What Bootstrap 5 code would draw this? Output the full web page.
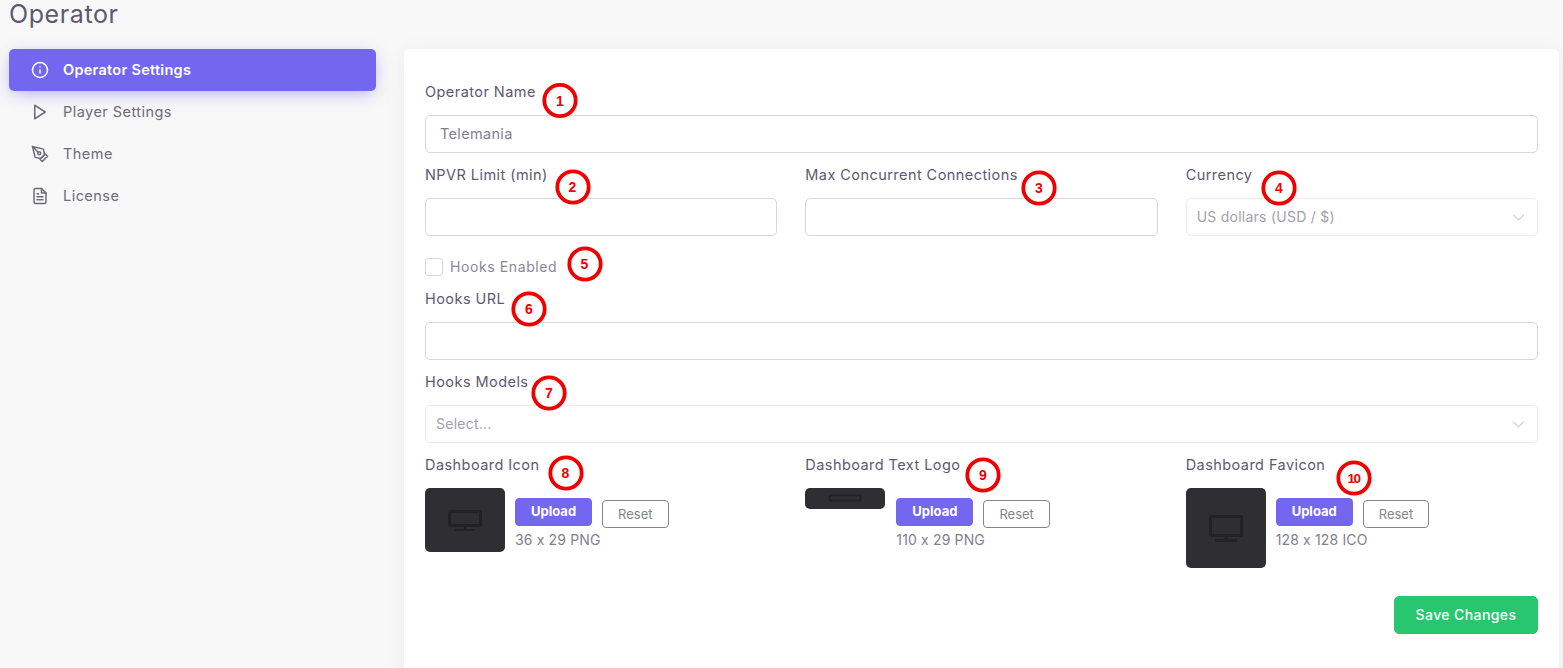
<!DOCTYPE html>
<html lang="en"><head><meta charset="utf-8"><title>Operator</title>
<link href="https://cdn.jsdelivr.net/npm/bootstrap@5.3.0/dist/css/bootstrap.min.css" rel="stylesheet">
<style>
html,body{height:668px;overflow:hidden}
body{background:#f8f8f8;font-family:Inter,"Liberation Sans",sans-serif;font-size:14px;line-height:21px;color:#6e6b7b;position:relative;letter-spacing:.15px}
.page-title{font-size:25px;line-height:26px;font-weight:400;color:#5e5873;margin:0 0 22px 9px;padding-top:1px;letter-spacing:.6px}
.page-wrap{display:flex;padding-left:9px}
.side-col{width:367px;flex:none}
.side-col .nav-link{height:42px;display:flex;align-items:center;gap:14px;padding:0 22px 2px;color:#6e6b7b;border-radius:5px;font-size:14.5px;letter-spacing:.46px}
.side-col .nav-link svg{width:18px;height:18px;flex:none;fill:none;stroke:currentColor;stroke-width:2;stroke-linecap:round;stroke-linejoin:round;position:relative;top:1px}
.side-col .nav-link.active{background:#7367f0;color:#fff;font-weight:600;letter-spacing:.28px;box-shadow:0 4px 18px -4px rgba(115,103,240,.65)}
.main-card{flex:1;margin:0 4px 0 28px;border:0;border-radius:6px;box-shadow:0 4px 24px rgba(34,41,47,.05);height:640px}
.main-card .card-body{padding:32px 21px}
.row-fields{--bs-gutter-x:28px}
.field-gap{margin-bottom:11px}
.field-label{display:block;color:#5e5873;margin-bottom:13px;line-height:21px;font-size:14.5px;letter-spacing:.44px}
.field-input{height:38px;border:1px solid #d8d6de;border-radius:5px;padding:0 14px 2px;color:#82808f;font-size:14.5px;letter-spacing:.33px}
.field-select{height:38px;border:1px solid #ececf0;border-radius:5px;padding:0 10px 2px;color:#a3a1ac;font-size:14px;letter-spacing:.25px;background-image:url("data:image/svg+xml,%3csvg xmlns='http://www.w3.org/2000/svg' viewBox='0 0 16 16'%3e%3cpath fill='none' stroke='%23dcdce2' stroke-width='2' stroke-linecap='round' stroke-linejoin='round' d='M2 5l6 6 6-6'/%3e%3c/svg%3e");background-position:right 12px center;background-size:13px}
.check-line{display:flex;align-items:center;gap:7px;height:21px;margin:20px 0 11px;color:#8a8896;letter-spacing:.6px}
.check-line .form-check-input{width:18px;height:18px;margin:0;border:1px solid #d8d6de;border-radius:3px;flex:none}
.thumb{background:#2e2e33;border-radius:5px;width:80px;flex:none;display:flex;align-items:center;justify-content:center}
.thumb svg{fill:none;stroke:#222226}
.thumb-a{height:64px}.thumb-a svg{width:34px;height:21px}
.thumb-b{height:21px}.thumb-b svg{width:34px;height:9px}
.thumb-c{height:80px}.thumb-c svg{width:34px;height:27px}
.up-side{margin:10px 0 0 10px}
.thumb-b + .up-side{margin-left:11px}
.btn-up{height:28px;padding:0 15px 2px;font-size:13px;font-weight:700;line-height:24px;background:#7367f0;border-color:#7367f0;border-radius:4px;color:#fff;letter-spacing:0}
.btn-reset{height:28px;padding:0 15px;font-size:13px;line-height:26px;margin:2px 0 0 10px;border:1px solid #82868b;color:#82868b;border-radius:4px;background:#fff;letter-spacing:0}
.hint{margin-top:1px;font-size:14px;color:#82808f}
.btn-save{width:144px;height:38px;padding:0 0 2px;background:#28c76f;border-color:#28c76f;color:#fff;font-size:14px;font-weight:500;border-radius:5px;letter-spacing:.4px}
.save-line{margin-top:28px}
.marks{position:absolute;left:0;top:0;width:1563px;height:668px;pointer-events:none}
.marks circle{fill:#fff;stroke:#f00000;stroke-width:3.8}
.marks text{fill:#f00000;font:700 14px "Liberation Sans",sans-serif;text-anchor:middle;letter-spacing:0}
.marks .two-digit{letter-spacing:-1.4px;font-size:13.500px}
</style></head>
<body>
<h1 class="page-title">Operator</h1>
<div class="page-wrap">
  <div class="side-col">
    <ul class="nav nav-pills flex-column">
      <li class="nav-item"><a class="nav-link active" href="#"><svg viewBox="0 0 24 24"><circle cx="12" cy="12" r="10"/><line x1="12" y1="16" x2="12" y2="12"/><line x1="12" y1="8" x2="12.01" y2="8"/></svg>Operator Settings</a></li>
      <li class="nav-item"><a class="nav-link" href="#"><svg viewBox="0 0 24 24"><polygon points="5 3 19 12 5 21 5 3"/></svg>Player Settings</a></li>
      <li class="nav-item"><a class="nav-link" href="#"><svg viewBox="0 0 24 24"><path d="M12 19l7-7 3 3-7 7-3-3z"/><path d="M18 13l-1.5-7.5L2 2l3.5 14.5L13 18l5-5z"/><path d="M2 2l7.586 7.586"/><circle cx="11" cy="11" r="2"/></svg>Theme</a></li>
      <li class="nav-item"><a class="nav-link" href="#"><svg viewBox="0 0 24 24"><path d="M14 2H6a2 2 0 0 0-2 2v16a2 2 0 0 0 2 2h12a2 2 0 0 0 2-2V8z"/><polyline points="14 2 14 8 20 8"/><line x1="16" y1="13" x2="8" y2="13"/><line x1="16" y1="17" x2="8" y2="17"/><polyline points="10 9 9 9 8 9"/></svg>License</a></li>
    </ul>
  </div>
  <div class="card main-card">
    <div class="card-body">
      <div class="field-gap">
        <label class="field-label">Operator Name</label>
        <input class="form-control field-input" value="Telemania">
      </div>
      <div class="row row-fields field-gap">
        <div class="col-4"><label class="field-label">NPVR Limit (min)</label><input class="form-control field-input"></div>
        <div class="col-4"><label class="field-label">Max Concurrent Connections</label><input class="form-control field-input"></div>
        <div class="col-4"><label class="field-label">Currency</label><select class="form-select field-select"><option>US dollars (USD / $)</option></select></div>
      </div>
      <div class="check-line"><input class="form-check-input" type="checkbox"><span>Hooks Enabled</span></div>
      <div class="field-gap">
        <label class="field-label">Hooks URL</label>
        <input class="form-control field-input">
      </div>
      <div class="field-gap">
        <label class="field-label">Hooks Models</label>
        <select class="form-select field-select"><option>Select...</option></select>
      </div>
      <div class="row row-fields">
        <div class="col-4">
          <label class="field-label">Dashboard Icon</label>
          <div class="d-flex align-items-start">
            <div class="thumb thumb-a"><svg viewBox="0 0 34 21" preserveAspectRatio="none"><rect x="1.5" y="1.5" width="31" height="14" rx="1" stroke-width="3"/><path d="M17 16v3M7 20h20" stroke-width="2"/></svg></div>
            <div class="up-side">
              <div class="d-flex align-items-start"><button class="btn btn-up">Upload</button><button class="btn btn-reset">Reset</button></div>
              <div class="hint">36 x 29 PNG</div>
            </div>
          </div>
        </div>
        <div class="col-4">
          <label class="field-label">Dashboard Text Logo</label>
          <div class="d-flex align-items-start">
            <div class="thumb thumb-b"><svg viewBox="0 0 34 9" preserveAspectRatio="none"><rect x="1.5" y="1.5" width="31" height="5" rx="1" stroke-width="2"/></svg></div>
            <div class="up-side">
              <div class="d-flex align-items-start"><button class="btn btn-up">Upload</button><button class="btn btn-reset">Reset</button></div>
              <div class="hint">110 x 29 PNG</div>
            </div>
          </div>
        </div>
        <div class="col-4">
          <label class="field-label">Dashboard Favicon</label>
          <div class="d-flex align-items-start">
            <div class="thumb thumb-c"><svg viewBox="0 0 34 27"><rect x="1.5" y="1.5" width="31" height="19" rx="1" stroke-width="3"/><path d="M17 21v3M6 25.5h22" stroke-width="3"/></svg></div>
            <div class="up-side">
              <div class="d-flex align-items-start"><button class="btn btn-up">Upload</button><button class="btn btn-reset">Reset</button></div>
              <div class="hint">128 x 128 ICO</div>
            </div>
          </div>
        </div>
      </div>
      <div class="d-flex justify-content-end save-line"><button class="btn btn-save">Save Changes</button></div>
    </div>
  </div>
</div>
<svg class="marks" viewBox="0 0 1563 668">
  <circle cx="560" cy="100.500" r="15.700"/><text x="560" y="105.500">1</text>
  <circle cx="573" cy="187" r="15.700"/><text x="572.500" y="192">2</text>
  <circle cx="1039" cy="188" r="15.700"/><text x="1039" y="193">3</text>
  <circle cx="1279" cy="188" r="15.700"/><text x="1279" y="193">4</text>
  <circle cx="585" cy="264" r="15.700"/><text x="584.500" y="269">5</text>
  <circle cx="529" cy="309" r="15.700"/><text x="529" y="314">6</text>
  <circle cx="549" cy="393" r="15.700"/><text x="549" y="398">7</text>
  <circle cx="566" cy="473" r="15.700"/><text x="565.500" y="478">8</text>
  <circle cx="983" cy="475" r="15.700"/><text x="983" y="480">9</text>
  <circle cx="1354" cy="478" r="15.700"/><text class="two-digit" x="1353.500" y="483">10</text>
</svg>
<script src="https://cdn.jsdelivr.net/npm/bootstrap@5.3.0/dist/js/bootstrap.bundle.min.js"></script>
</body></html>
